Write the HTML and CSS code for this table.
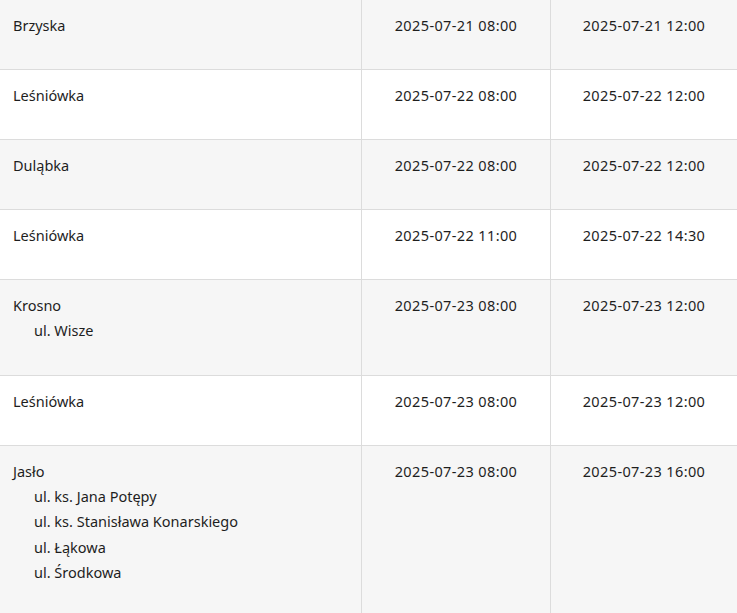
FILE: index.html
```html
<!DOCTYPE html>
<html lang="pl">
<head>
<meta charset="utf-8">
<link rel="stylesheet" href="styles.css">
</head>
<body>
<div class="table">
  <div class="row odd">
    <div class="cell place"><div class="town">Brzyska</div></div>
    <div class="cell date">2025-07-21 08:00</div>
    <div class="cell date last">2025-07-21 12:00</div>
  </div>
  <div class="row">
    <div class="cell place"><div class="town">Leśniówka</div></div>
    <div class="cell date">2025-07-22 08:00</div>
    <div class="cell date last">2025-07-22 12:00</div>
  </div>
  <div class="row odd">
    <div class="cell place"><div class="town">Duląbka</div></div>
    <div class="cell date">2025-07-22 08:00</div>
    <div class="cell date last">2025-07-22 12:00</div>
  </div>
  <div class="row">
    <div class="cell place"><div class="town">Leśniówka</div></div>
    <div class="cell date">2025-07-22 11:00</div>
    <div class="cell date last">2025-07-22 14:30</div>
  </div>
  <div class="row odd">
    <div class="cell place">
      <div class="town">Krosno</div>
      <ul class="streets"><li>ul. Wisze</li></ul>
    </div>
    <div class="cell date">2025-07-23 08:00</div>
    <div class="cell date last">2025-07-23 12:00</div>
  </div>
  <div class="row">
    <div class="cell place"><div class="town">Leśniówka</div></div>
    <div class="cell date">2025-07-23 08:00</div>
    <div class="cell date last">2025-07-23 12:00</div>
  </div>
  <div class="row odd">
    <div class="cell place">
      <div class="town">Jasło</div>
      <ul class="streets">
        <li>ul. ks. Jana Potępy</li>
        <li>ul. ks. Stanisława Konarskiego</li>
        <li>ul. Łąkowa</li>
        <li>ul. Środkowa</li>
      </ul>
    </div>
    <div class="cell date">2025-07-23 08:00</div>
    <div class="cell date last">2025-07-23 16:00</div>
  </div>
</div>
</body>
</html>
```

FILE: styles.css
```css
html, body {
  margin: 0;
  padding: 0;
  background: #ffffff;
}
body {
  font-family: "Noto Sans", "Open Sans", sans-serif;
  font-size: 14.5px;
  color: #1e1e1e;
}
.table {
  width: 737px;
}
.row {
  display: grid;
  grid-template-columns: 362px 189px 186px;
  background: #ffffff;
}
.row.odd {
  background: #f6f6f6;
}
.cell {
  box-sizing: border-box;
  border-right: 1px solid #dcdcdc;
  border-bottom: 1px solid #dcdcdc;
  padding: 13px 12px 31px 13px;
  line-height: 25px;
}
.cell.last {
  border-right: none;
}
.date {
  text-align: center;
  padding-left: 0;
  padding-right: 0;
  letter-spacing: 0.38px;
}
.streets {
  list-style: none;
  margin: 0;
  padding: 0 0 0 21px;
}
.streets li {
  line-height: 25.5px;
}
```
